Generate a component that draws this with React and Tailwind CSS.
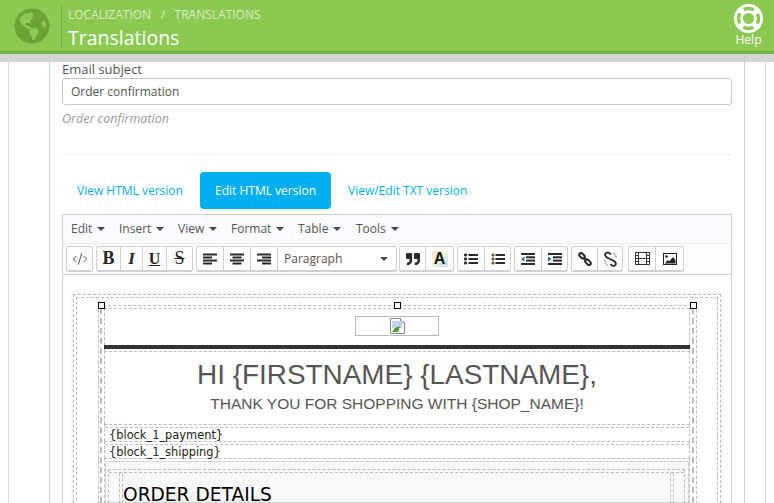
import React from 'react';
import { FaGlobeAmericas, FaQuoteRight } from 'react-icons/fa';
import { CodeXml } from 'lucide-react';

const menus = [
  { label: 'Edit', w: 'w-[48px]' },
  { label: 'Insert', w: 'w-[59px]' },
  { label: 'View', w: 'w-[53px]' },
  { label: 'Format', w: 'w-[67px]' },
  { label: 'Table', w: 'w-[58px]' },
  { label: 'Tools', w: 'w-[60px]' },
];

const Caret = () => (
  <span className="ml-[5px] inline-block border-x-[4px] border-t-[4px] border-x-transparent border-t-[#444]" />
);

// toolbar group, cell widths come from the screenshot
const Group = ({ children, className = '' }) => (
  <div className={`flex h-[26px] rounded-[3px] border border-b-2 border-[#d0d0d0] bg-white ${className}`}>{children}</div>
);

const Btn = ({ w, children, last }) => (
  <div className={`flex h-full items-center justify-center ${w} ${last ? '' : 'border-r border-[#d0d0d0]'}`}>{children}</div>
);

const Lines = ({ rows }) => (
  <svg width="14" height="12" viewBox="0 0 14 12" fill="#2a2a2a">
    {rows.map(([x, w], i) => (
      <rect key={i} x={x} y={0.5 + i * 3} width={w} height="2" />
    ))}
  </svg>
);

const BulletList = ({ numbered }) => (
  <svg width="14" height="12" viewBox="0 0 14 12" fill="#2a2a2a">
    {[1, 5, 9].map((y) => (
      <g key={y}>
        <rect x={numbered ? 0.5 : 0} y={y - 0.5} width="3" height="3" rx="1.2" fill={numbered ? '#6b5a28' : '#2a2a2a'} />
        <rect x="4.5" y={y} width="9.5" height="2" />
      </g>
    ))}
  </svg>
);

const Indent = ({ out }) => (
  <svg width="14" height="12" viewBox="0 0 14 12" fill="#2a2a2a">
    <rect x="0" y="0" width="14" height="2" />
    <rect x="5" y="3.3" width="9" height="2" />
    <rect x="5" y="6.6" width="9" height="2" />
    <rect x="0" y="10" width="14" height="2" />
    <path d={out ? 'M3.5 3.5v5L0 6z' : 'M0 3.5v5L3.5 6z'} fill="#1c6b86" />
  </svg>
);

const LinkIcon = () => (
  <svg width="14" height="14" viewBox="0 0 14 14" fill="none" stroke="#2a2a2a" strokeWidth="2">
    <rect x="0.8" y="2" width="6.4" height="3.6" rx="1.8" transform="rotate(45 4 3.8)" />
    <rect x="6.8" y="8.4" width="6.4" height="3.6" rx="1.8" transform="rotate(45 10 10.2)" />
    <path d="M5.5 5.5l3 3" />
  </svg>
);

const UnlinkIcon = () => (
  <svg width="15" height="16" viewBox="0 0 15 16" fill="none" stroke="#2a2a2a">
    <path d="M8 3.5C6.5 1.5 4 1 2.8 2.2S2 5 4 6.5L11 10c2 1.5 2.5 3 1.3 4.2S9 15 7.5 13" strokeWidth="1.8" />
    <path d="M11 1v2.5M13.5 3l-2 1.5M14.5 6H12M1 10h2.5M1.5 13l2-1.5M4 15v-2" strokeWidth="0.8" stroke="#777" />
  </svg>
);

const Film = () => (
  <svg width="15" height="13" viewBox="0 0 15 13" fill="none" stroke="#333">
    <rect x="0.5" y="0.5" width="14" height="12" />
    <path d="M3.5 0.5v12M11.5 0.5v12M3.5 6.5h8M0.5 3.5h3M0.5 6.5h3M0.5 9.5h3M11.5 3.5h3M11.5 6.5h3M11.5 9.5h3" />
  </svg>
);

const Picture = () => (
  <svg width="14" height="12" viewBox="0 0 14 12">
    <rect x="0.5" y="0.5" width="13" height="11" fill="#fff" stroke="#222" />
    <circle cx="3.5" cy="3.5" r="1.3" fill="#222" />
    <path d="M1.5 10.5l3.5-3.5 1.5 1.2L10 4l2.5 3.5v3z" fill="#222" />
  </svg>
);

const LifeRing = () => (
  <svg width="29" height="29" viewBox="0 0 29 29">
    <circle cx="14.5" cy="14.5" r="14.5" fill="#fff" />
    <circle cx="14.5" cy="14.5" r="10" fill="none" stroke="#8bc953" strokeWidth="3.4" strokeDasharray="10.5 5.2" strokeDashoffset="5.2" />
    <circle cx="14.5" cy="14.5" r="5.5" fill="#8bc953" />
  </svg>
);

const BrokenImage = () => (
  <svg width="15" height="16" viewBox="0 0 15 16">
    <path d="M0.5 0.5h10l4 4v11h-14z" fill="#fff" stroke="#888" />
    <path d="M10.5 0.5v4h4" fill="#eee" stroke="#888" />
    <rect x="2" y="3" width="10" height="7" fill="#c5d3f3" />
    <path d="M2 14l3-4 5-2-2 6z" fill="#4f9a2c" />
    <path d="M8 15l6-6v6z" fill="#fff" />
  </svg>
);

const Handle = ({ className }) => (
  <div className={`absolute top-[302px] size-[7px] border border-black bg-white ${className}`} />
);

export default function App() {
  return (
    <div className="flex h-[503px] flex-col overflow-hidden bg-white font-['Open_Sans',sans-serif]">
      {/* header */}
      <div className="flex h-[54px] shrink-0 border-b-[3px] border-[#70b236] bg-[#8bc953]">
        <div className="ml-[14px] mt-[8px] size-[36px] text-[#6ba337]">
          <FaGlobeAmericas size={36} />
        </div>
        <div className="ml-[11px] mt-[6px] h-[42px] border-l border-[#6fa83f] pl-[6px]">
          <div className="flex text-[12px] uppercase leading-[18px] text-[#d6ebc0]">
            <span>Localization</span>
            <span className="mx-[9.5px]">/</span>
            <span>Translations</span>
          </div>
          <div className="text-[19.5px] leading-[27px] text-white">Translations</div>
        </div>
        <div className="ml-auto mr-[11px] mt-[4px] flex w-[29px] flex-col items-center text-white">
          <LifeRing />
          <span className="mt-[-1px] text-[12px] leading-[16px]">Help</span>
        </div>
      </div>

      {/* page */}
      <div className="min-h-0 flex-1 bg-[linear-gradient(#d4d4d4_8px,#fff_8px)]">
        <div className="ml-[8px] h-full w-[758px] border-x border-[#d8d8d8] pl-[40px] pr-[20px]">
          <div className="h-full border-x border-[#d0d0d0] px-[12px] pt-[7px]">
            <div className="text-[13px] leading-[17px] text-[#555]">Email subject</div>
            <div className="flex h-[27px] w-[670px] items-center rounded-[3px] border border-[#c8c8c8] bg-white px-[8px] text-[12px] text-[#555]">
              Order confirmation
            </div>
            <div className="mt-[5px] text-[12.5px] italic leading-[18px] text-[#999]">Order confirmation</div>
            <div className="mt-[26px] w-[670px] border-t border-[#eeeeee]" />

            {/* tabs */}
            <div className="mt-[17px] flex h-[37px] items-center text-[12px] text-[#00aff0]">
              <div className="ml-[15px] w-[123px]">View HTML version</div>
              <div className="flex h-[37px] w-[131px] items-center justify-center rounded-[4px] bg-[#00aff0] text-white">
                Edit HTML version
              </div>
              <div className="ml-[17px]">View/Edit TXT version</div>
            </div>

            {/* editor */}
            <div className="mt-[5px] w-[670px] border border-b-0 border-[#d0d0d0]">
              <div className="flex h-[29px] items-center border-b border-[#ececec] bg-[#fbfcff] pl-[8px] text-[12px] text-[#555]">
                {menus.map((m) => (
                  <div key={m.label} className={`flex items-center ${m.w}`}>
                    {m.label}
                    <Caret />
                  </div>
                ))}
              </div>
              <div className="flex h-[31px] items-start gap-[3px] border-b border-[#d0d0d0] bg-[#fdfdfd] pl-[3px] pt-[2px]">
                <Group>
                  <Btn w="w-[25px]" last><CodeXml size={16} strokeWidth={1.3} color="#333" /></Btn>
                </Group>
                <Group className="font-['Liberation_Serif',serif] text-[16px] text-[#222]">
                  <Btn w="w-[24px]"><b className="text-[18px]">B</b></Btn>
                  <Btn w="w-[22px]"><b className="text-[17px] italic">I</b></Btn>
                  <Btn w="w-[24px]"><b className="underline">U</b></Btn>
                  <Btn w="w-[25px]" last><span className="text-[18px] line-through">S</span></Btn>
                </Group>
                <Group>
                  <Btn w="w-[27px]"><Lines rows={[[0, 14], [0, 9], [0, 14], [0, 9]]} /></Btn>
                  <Btn w="w-[27px]"><Lines rows={[[0, 14], [2.5, 9], [0, 14], [2.5, 9]]} /></Btn>
                  <Btn w="w-[27px]"><Lines rows={[[0, 14], [5, 9], [0, 14], [5, 9]]} /></Btn>
                  <div className="flex w-[118px] items-center justify-between pl-[6px] pr-[8px] text-[12px] text-[#555]">
                    Paragraph
                    <span className="inline-block border-x-[4px] border-t-[4px] border-x-transparent border-t-[#444]" />
                  </div>
                </Group>
                <Group className="ml-[-1px]">
                  <Btn w="w-[26px]"><FaQuoteRight size={14} color="#2a2a2a" /></Btn>
                  <Btn w="w-[27px]" last>
                    <span className="flex size-[16px] items-center justify-center bg-[linear-gradient(135deg,#fbd9d9,#fdfbd0,#cfeee0,#d5dcf8)] font-['Liberation_Sans',sans-serif] text-[16px] font-bold leading-[16px] text-[#111]">A</span>
                  </Btn>
                </Group>
                <Group>
                  <Btn w="w-[27px]"><BulletList /></Btn>
                  <Btn w="w-[25px]" last><BulletList numbered /></Btn>
                </Group>
                <Group>
                  <Btn w="w-[27px]"><Indent out /></Btn>
                  <Btn w="w-[25px]" last><Indent /></Btn>
                </Group>
                <Group>
                  <Btn w="w-[26px]"><LinkIcon /></Btn>
                  <Btn w="w-[24px]" last><UnlinkIcon /></Btn>
                </Group>
                <Group className="ml-[2px]">
                  <Btn w="w-[27px]"><Film /></Btn>
                  <Btn w="w-[27px]" last><Picture /></Btn>
                </Group>
              </div>

              {/* email body */}
              <div className="h-[300px] bg-white pl-[10px] pr-[10px] pt-[19px]">
                <div className="w-[648px] border border-dashed border-[#bbb] p-[2px] shadow-[0_0_4px_rgba(0,0,0,0.12)]">
                  <div className="border border-dashed border-[#bbb] pl-[21px] pr-[20px] pt-[7px]">
                    <div className="border border-dashed border-[#bbb] pl-[1px] pr-[2px] pt-[2px]">
                      <div className="border-x-2 border-dashed border-[#bbb] pl-[2px] pr-[2px]">
                        <div className="flex h-[37px] items-start justify-center border-x border-t border-dashed border-[#bbb] pt-[7px]">
                          <div className="flex h-[20px] w-[84px] justify-center border border-[#bbb] pt-[1px]">
                            <BrokenImage />
                          </div>
                        </div>
                        <div className="border-x border-dashed border-[#bbb] pb-[2px]">
                          <div className="mx-[-1px] h-[4px] bg-[#333]" />
                        </div>
                        <div className="h-[73px] border-x border-t border-dashed border-[#bbb] pt-[7px] text-center font-['Liberation_Sans',sans-serif] uppercase text-[#555]">
                          <div className="text-[27.9px] leading-[32px]">Hi {'{FIRSTNAME}'} {'{LASTNAME}'},</div>
                          <div className="mt-[1px] text-[15.5px] leading-[24px]">Thank you for shopping with {'{SHOP_NAME}'}!</div>
                        </div>
                        <div className="border-x border-t border-dashed border-[#bbb] pt-[2px]">
                          <div className="h-[14px] border-t border-dashed border-[#bbb] pl-[4px] pt-[1px] font-['DejaVu_Sans',sans-serif] text-[11.4px] leading-[13px] text-[#222]">
                            {'{block_1_payment}'}
                          </div>
                        </div>
                        <div className="border-x border-t border-dashed border-[#bbb] pt-[2px]">
                          <div className="h-[14px] border-t border-dashed border-[#bbb] pl-[4px] pt-[1px] font-['DejaVu_Sans',sans-serif] text-[11.4px] leading-[13px] text-[#222]">
                            {'{block_1_shipping}'}
                          </div>
                        </div>
                        <div className="border-x border-t border-dashed border-[#bbb] pt-[2px]">
                          <div className="h-[42px] border border-[#d4d4d4] bg-[#f8f8f8] pl-[2px] pr-[3px] pt-[7px]">
                            <div className="border-x border-t border-dashed border-[#bbb] pt-[2px]">
                              <div className="border-t border-dashed border-[#bbb] pl-[10px] pr-[10px]">
                                <div className="border-x border-dashed border-[#bbb] pl-[2px] pr-[2px]">
                                  <div className="border-x border-dashed border-[#bbb] pt-[14px] font-['DejaVu_Sans',sans-serif] text-[18.6px] leading-[16px] text-black">
                                    ORDER DETAILS
                                  </div>
                                </div>
                              </div>
                            </div>
                          </div>
                        </div>
                      </div>
                    </div>
                  </div>
                </div>
              </div>
            </div>
          </div>
        </div>
      </div>

      {/* selection handles of the image table */}
      <Handle className="left-[98px]" />
      <Handle className="left-[394px]" />
      <Handle className="left-[690px]" />
    </div>
  );
}
